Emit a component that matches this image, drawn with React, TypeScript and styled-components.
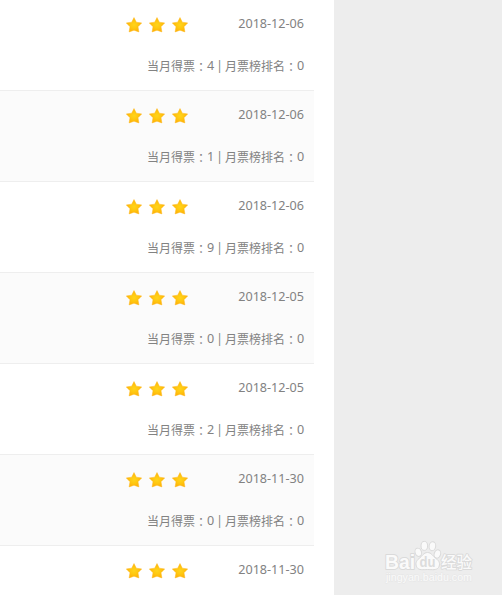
import React from "react";
import styled, { createGlobalStyle } from "styled-components";

const GlobalStyle = createGlobalStyle`
  * { box-sizing: border-box; }
  body { margin: 0; background: #ededed; }
`;

const Page = styled.div`
  position: relative;
  width: 502px;
  height: 595px;
  overflow: hidden;
  background: #ededed;
  color: #828282;
  font-family: "Noto Sans", "Noto Sans CJK SC", sans-serif;
  font-size: 12px;
`;

const Panel = styled.main`
  width: 334px;
  height: 100%;
  padding-right: 20px;
  background: #fff;
  overflow: hidden;
`;

const Row = styled.section<{ $shaded: boolean }>`
  height: 91px;
  padding: 14px 10px 0 126px;
  border-bottom: 1px solid #eee;
  background: ${(p) => (p.$shaded ? "#fbfbfb" : "#fff")};
`;

const RowTop = styled.div`
  display: flex;
  justify-content: space-between;
  height: 20px;
`;

const Stars = styled.div`
  display: flex;
  gap: 7px;
  padding-top: 3px;
  svg { display: block; }
`;

const DateText = styled.time`
  font-size: 12.6px;
  line-height: 20px;
  white-space: nowrap;
`;

const Votes = styled.div`
  display: flex;
  justify-content: flex-end;
  margin-top: 22px;
  height: 20px;
  line-height: 20px;
  white-space: nowrap;
`;

const Label = styled.span`
  font-family: "Noto Sans CJK SC", sans-serif;
`;

const Colon = styled.span`
  width: 12px;
  padding-top: 1px;
  font-family: "Noto Sans CJK TC", sans-serif;
`;

const Count = styled.span`
  width: 7px;
  font-size: 12.6px;
`;

const Divider = styled.span`
  width: 11px;
  text-align: center;
`;

const Watermark = styled.div`
  position: absolute;
  left: 384px;
  top: 539px;
  width: 92px;
  height: 50px;
  svg { display: block; }
`;

const Star = () => (
  <svg width="16" height="16" viewBox="0 0 16 16">
    <path
      d="M8 .6 10.3 5.200 15.700 5.900 12 9.700 12.900 14.900 8 13.200 3.100 14.900 4 9.700.3 5.900 5.700 5.200Z"
      fill="url(#starFill)"
      stroke="#fdb81c"
      strokeWidth=".5"
      strokeLinejoin="round"
    />
  </svg>
);

const Logo = () => (
  <svg width="92" height="50" viewBox="0 0 92 50">
    <defs>
      <radialGradient id="starFill">
        <stop offset="0" stopColor="#ffd41c" />
        <stop offset=".5" stopColor="#ffc710" />
        <stop offset="1" stopColor="#ffb108" />
      </radialGradient>
    </defs>
    <g fill="#fafafa" stroke="#dadada" strokeWidth="1">
      <ellipse cx="34.3" cy="13.300" rx="3.200" ry="4.200" transform="rotate(-18 34.3 13.3)" />
      <ellipse cx="40.3" cy="6.900" rx="3.300" ry="4.500" />
      <ellipse cx="48.4" cy="7.200" rx="3.300" ry="4.500" transform="rotate(8 48.4 7.2)" />
      <ellipse cx="53.4" cy="15" rx="3.200" ry="4.200" transform="rotate(18 53.4 15)" />
      <path d="M43.500 13.500c-4 0-5.500 4-8.500 6C32 22 31 25 33 28.500c2 3 6 2 10.500 2s9 1 11-2c2-3.500 1-6.500-2.500-9C49 17.500 47.500 13.500 43.500 13.500Z" />
    </g>
    <g fontFamily="Liberation Sans, sans-serif" fontWeight="700">
      <g paintOrder="stroke" fill="#fafafa" strokeLinejoin="round">
        <text x="1" y="29.5" fontSize="20.5" textLength="30" lengthAdjust="spacingAndGlyphs" stroke="#dadada" strokeWidth="2">Bai</text>
        <text x="57" y="29" fontSize="15.5" textLength="31" lengthAdjust="spacingAndGlyphs" fontWeight="500" fontFamily="Noto Sans CJK SC, sans-serif" stroke="#dadada" strokeWidth="1.8">经验</text>
      </g>
      <text x="35.5" y="28" fontSize="15" textLength="16" lengthAdjust="spacingAndGlyphs" fill="#dcdcdc">du</text>
      <text x="2" y="42" fontSize="11" fontWeight="400" textLength="86" lengthAdjust="spacingAndGlyphs" paintOrder="stroke" fill="#fafafa" stroke="#e6e6e6" strokeWidth="1">jingyan.baidu.com</text>
    </g>
  </svg>
);

const entries = [
  { date: "2018-12-06", votes: 4 },
  { date: "2018-12-06", votes: 1 },
  { date: "2018-12-06", votes: 9 },
  { date: "2018-12-05", votes: 0 },
  { date: "2018-12-05", votes: 2 },
  { date: "2018-11-30", votes: 0 },
  { date: "2018-11-30", votes: null },
];

export default function App() {
  return (
    <Page>
      <GlobalStyle />
      <Panel>
        {entries.map((entry, i) => (
          <Row key={i} $shaded={i % 2 === 1}>
            <RowTop>
              <Stars>
                <Star />
                <Star />
                <Star />
              </Stars>
              <DateText>{entry.date}</DateText>
            </RowTop>
            {entry.votes !== null && (
              <Votes>
                <Label>当月得票</Label>
                <Colon>：</Colon>
                <Count>{entry.votes}</Count>
                <Divider>|</Divider>
                <Label>月票榜排名</Label>
                <Colon>：</Colon>
                <Count>0</Count>
              </Votes>
            )}
          </Row>
        ))}
      </Panel>
      <Watermark>
        <Logo />
      </Watermark>
    </Page>
  );
}
